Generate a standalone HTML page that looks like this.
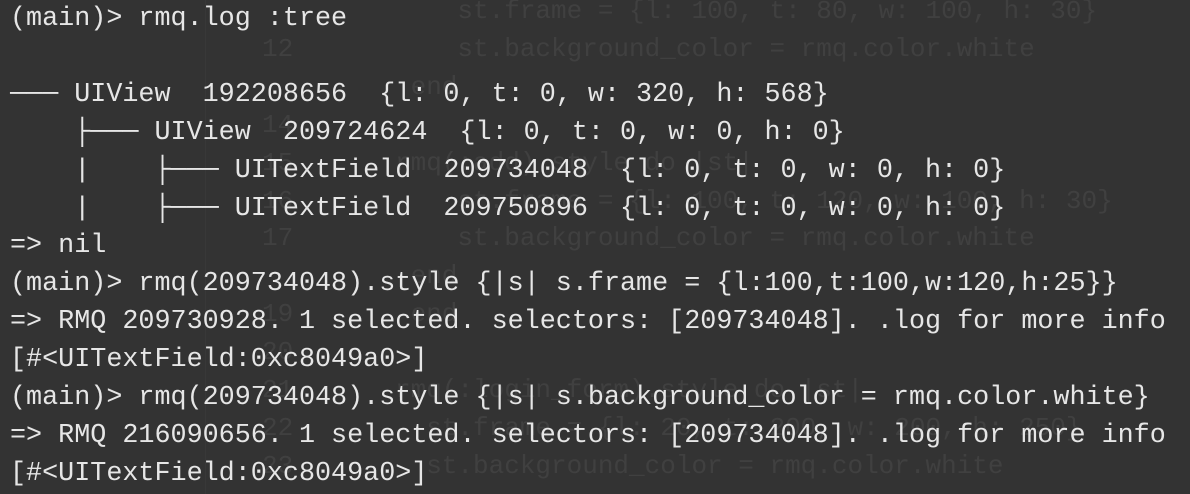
<!DOCTYPE html>
<html><head><style>
html,body{margin:0;padding:0}
body{width:1190px;height:494px;background:#333333;overflow:hidden;position:relative;font-family:"Liberation Mono","DejaVu Sans Mono",monospace}
.bg{position:absolute;top:-7px;font-size:26px;line-height:37.9px;color:#404040;white-space:pre}
.vl{position:absolute;left:205px;top:0;width:1px;height:494px;background:#383838}
.fg{position:absolute;left:10px;top:1px;font-size:26.75px;line-height:37.9px;color:#e6e6e6;white-space:pre;letter-spacing:0}
</style></head><body>
<div class="vl"></div>
<div class="bg" style="left:262px">
12

14
15
16
17

19
20
21
22
23</div>
<div class="bg" style="left:395px">    st.frame = {l: 100, t: 80, w: 100, h: 30}
    st.background_color = rmq.color.white
 end

rmq(:add).style do |st|
    st.frame = {l: 100, t: 120, w: 100, h: 30}
    st.background_color = rmq.color.white
 end
 end

rmq(:login_form).style do |st|
  st.frame = {l: 20, t: 200, w: 200, h: 250}
  st.background_color = rmq.color.white</div>
<div class="fg">(main)&gt; rmq.log :tree

─── UIView  192208656  {l: 0, t: 0, w: 320, h: 568}
    ├─── UIView  209724624  {l: 0, t: 0, w: 0, h: 0}
    |    ├─── UITextField  209734048  {l: 0, t: 0, w: 0, h: 0}
    |    ├─── UITextField  209750896  {l: 0, t: 0, w: 0, h: 0}
=&gt; nil
(main)&gt; rmq(209734048).style {|s| s.frame = {l:100,t:100,w:120,h:25}}
=&gt; RMQ 209730928. 1 selected. selectors: [209734048]. .log for more info
[#&lt;UITextField:0xc8049a0&gt;]
(main)&gt; rmq(209734048).style {|s| s.background_color = rmq.color.white}
=&gt; RMQ 216090656. 1 selected. selectors: [209734048]. .log for more info
[#&lt;UITextField:0xc8049a0&gt;]</div>
</body></html>
